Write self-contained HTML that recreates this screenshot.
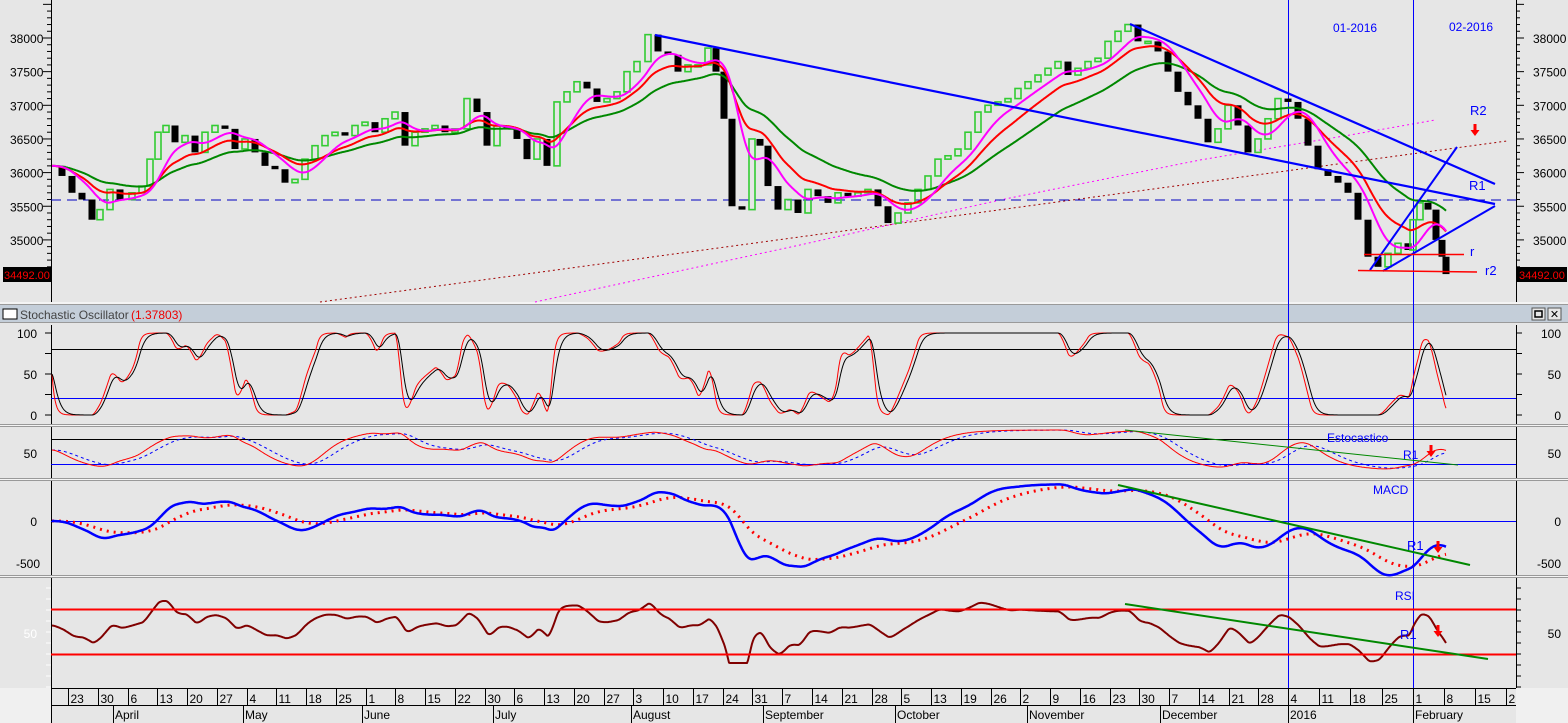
<!DOCTYPE html>
<html><head><meta charset="utf-8"><style>
html,body{margin:0;padding:0;width:1568px;height:723px;overflow:hidden;background:#e6e6e6;font-family:"Liberation Sans",sans-serif}
svg text{font-family:"Liberation Sans",sans-serif}
</style></head><body>
<svg id="s" width="1568" height="723" xmlns="http://www.w3.org/2000/svg" style="position:absolute;left:0;top:0">
<rect x="0" y="0" width="1568" height="723" fill="#e6e6e6"/>
</svg>
<script>
const S=document.getElementById('s');const NS='http://www.w3.org/2000/svg';
function el(t,a,txt){const e=document.createElementNS(NS,t);for(const k in a)e.setAttribute(k,a[k]);if(txt!==undefined)e.textContent=txt;S.appendChild(e);return e;}
function line(x1,y1,x2,y2,c,w,d){const a={x1,y1,x2,y2,stroke:c,'stroke-width':w||1};if(d)a['stroke-dasharray']=d;return el('line',a);}
function txt(x,y,s,c,sz,anc){return el('text',{x,y,fill:c||'#000','font-size':sz||12,'text-anchor':anc||'start'},s);}
function poly(pts,c,w,d){const a={points:pts.map(p=>p[0].toFixed(1)+','+p[1].toFixed(1)).join(' '),fill:'none',stroke:c,'stroke-width':w||1,'stroke-linejoin':'round'};if(d)a['stroke-dasharray']=d;return el('polyline',a);}
el('rect',{x:0,y:302,width:1568,height:3,fill:'#f4f4f4'});
el('rect',{x:0,y:305,width:1568,height:17,fill:'#c4ced9'});
line(0,304.5,1568,304.5,'#9a9a9a',1);line(0,322.5,1568,322.5,'#9a9a9a',1);
[424,478,575].forEach(y=>{el('rect',{x:0,y:y,width:1568,height:3,fill:'#f4f4f4'});line(0,y+0.5,1568,y+0.5,'#999',1);line(0,y+2.5,1568,y+2.5,'#999',1);});
el('rect',{x:3,y:309,width:14,height:10,fill:'#fff',stroke:'#000'});
txt(20,319,'Stochastic Oscillator','#444',12);txt(131,319,'(1.37803)','#e00',12);
el('rect',{x:1532,y:308,width:13,height:12,fill:'#e6e6e6',stroke:'#555'});el('rect',{x:1535,y:311,width:7,height:6,fill:'none',stroke:'#000','stroke-width':1.5});
el('rect',{x:1548,y:308,width:13,height:12,fill:'#e6e6e6',stroke:'#555'});txt(1554.5,318,'✕','#000',11,'middle');
[[0,302],[325,424],[427,478],[481,575],[578,688]].forEach(([a,b])=>{line(51.5,a,51.5,b,'#000',1);line(1516.5,a,1516.5,b,'#000',1);});
const K=[[52,36100],[62,35950],[72,35700],[82,35600],[92,35300],[100,35450],[110,35750],[120,35600],[132,35700],[142,35800],[150,36200],[158,36600],[166,36700],[175,36450],[185,36550],[195,36300],[205,36600],[215,36700],[225,36650],[235,36350],[245,36500],[255,36300],[265,36100],[275,36050],[285,35850],[295,35900],[305,36200],[315,36400],[325,36550],[335,36600],[345,36550],[355,36700],[365,36750],[375,36600],[385,36800],[395,36900],[405,36400],[415,36600],[425,36650],[435,36700],[445,36600],[455,36650],[467,37100],[477,36900],[487,36400],[497,36700],[507,36650],[517,36500],[527,36200],[537,36500],[547,36100],[557,37050],[567,37200],[577,37350],[587,37250],[597,37050],[607,37100],[617,37200],[627,37500],[637,37650],[648,38050],[658,37800],[668,37750],[678,37500],[688,37600],[698,37600],[708,37850],[716,37500],[724,36800],[732,35500],[742,35450],[752,36500],[760,36400],[768,35800],[778,35450],[788,35600],[798,35400],[808,35750],[818,35650],[828,35550],[838,35700],[848,35650],[858,35700],[868,35750],[878,35500],[888,35250],[898,35400],[908,35550],[918,35750],[928,35950],[938,36200],[948,36250],[958,36350],[968,36600],[978,36900],[988,37000],[998,37050],[1008,37100],[1018,37250],[1028,37350],[1038,37450],[1048,37550],[1058,37650],[1068,37450],[1078,37550],[1088,37650],[1098,37700],[1108,37950],[1118,38100],[1128,38200],[1138,37950],[1148,37950],[1158,37800],[1168,37500],[1178,37200],[1188,37000],[1198,36800],[1208,36450],[1218,36650],[1228,37000],[1238,36700],[1248,36300],[1258,36500],[1268,36800],[1278,37100],[1288,37050],[1298,36800],[1308,36400],[1318,36050],[1328,35950],[1338,35850],[1348,35700],[1358,35300],[1368,34750],[1378,34600],[1388,34800],[1398,34950],[1408,34850],[1413,35300],[1420,35550],[1428,35450],[1436,35000],[1442,34750],[1446,34492]];
const py=p=>38+(38000-p)*0.0673;
line(320,302,1507,141,'#a00000',1,'2,3');
poly([[535,302],[800,245],[1000,200],[1200,160],[1350,135],[1435,120]],'#ff00ff',1,'2,3');
line(51,200,1516,200,'#0000c0',1,'10,6');
line(1288.5,0,1288.5,688,'#0000ff',1);line(1413.5,0,1413.5,688,'#0000ff',1);
let prev=K[0][1];
for(let i=1;i<K.length;i++){const [x,c]=K[i];const o=prev;const up=c>=o;const y1=py(Math.max(o,c)),y2=py(Math.min(o,c));const h=Math.max(y2-y1,2);
 if(up)el('rect',{x:x-3,y:y1,width:6,height:h,fill:'none',stroke:'#33cc33','stroke-width':1.6});
 else el('rect',{x:x-3.5,y:y1,width:7,height:h,fill:'#000'});
 prev=c;}
const X=[],P=[];for(let x=52;x<=1446;x++){let j=0;while(j<K.length-2&&K[j+1][0]<x)j++;const [xa,pa]=K[j],[xb,pb]=K[j+1];const t=Math.min(1,Math.max(0,(x-xa)/(xb-xa)));X.push(x);P.push(pa+(pb-pa)*t);}
function ema(a,n){const k=2/(n+1);let r=[],v=a[0];for(const z of a){v=v+k*(z-v);r.push(v);}return r;}
function pts(a,f){return a.map((v,i)=>[X[i],f(v)]);}
poly(pts(ema(P,150),py),'#008800',2);
poly(pts(ema(P,75),py),'#ff0000',2);
poly(pts(ema(ema(P,25),20),py),'#ff00ff',2);
line(655,35,1495,204,'#0000ff',2.2);line(1130,24,1495,184,'#0000ff',2.2);
line(1383,271,1495,206,'#0000ff',2);line(1370,270,1457,147,'#0000ff',2);
line(1364,254.5,1464,254.5,'#ff0000',1.5);line(1358,270.5,1477,272,'#ff0000',1.5);
txt(1333,32,'01-2016','#0000ff',12);txt(1449,31,'02-2016','#0000ff',12);
txt(1470,115,'R2','#0000ff',13);txt(1469,190,'R1','#0000ff',13);txt(1470,256,'r','#0000ff',13);txt(1485,275,'r2','#0000ff',13);
function arrow(x,y){el('path',{d:`M${x-1.5},${y} h3 v6 h3 l-4.5,6 l-4.5,-6 h3 z`,fill:'#ff0000'});}
arrow(1475,124);
for(let p=34500;p<=38500;p+=100){const y=py(p);if(y<2||y>300)continue;const big=p%500==0;line(1516,y,1516+(big?8:4),y,'#000',1);line(51,y,51-(big?8:4),y,'#000',1);if(big&&p<=38000){txt(1533,y+5,String(p),'#000',12);txt(10,y+5,String(p),'#000',12);}}
el('rect',{x:3,y:267,width:48,height:15,fill:'#000'});txt(4,279,'34492.00','#ff0000',11);
el('rect',{x:1517,y:267,width:50,height:15,fill:'#000'});txt(1519,279,'34492.00','#ff0000',11);
const st=[];const L=70;for(let i=0;i<P.length;i++){let lo=1e9,hi=-1e9;for(let j=Math.max(0,i-L);j<=i;j++){lo=Math.min(lo,P[j]);hi=Math.max(hi,P[j]);}st.push(hi>lo?(P[i]-lo)/(hi-lo)*100:50);}
const kf=ema(st,6),ks=ema(kf,8);
const sy=v=>415-v*0.82;
line(51,349.5,1516,349.5,'#000',1);line(51,398.5,1516,398.5,'#0000ff',1);
poly(pts(kf,sy),'#ff0000',1);poly(pts(ks,sy),'#000',1);
[[100,333],[50,374],[0,415]].forEach(([v,y])=>{txt(1561,y+5,String(v),'#000',12,'end');txt(37,y+5,String(v),'#000',12,'end');});
for(let v=0;v<=100;v+=25){line(1516,sy(v),1522,sy(v),'#000',1);line(51,sy(v),45,sy(v),'#000',1);}
const e1=ema(ema(st,40),20),e2=ema(e1,25);
const ey=v=>470-v*0.4;
line(51,439.5,1516,439.5,'#000',1);line(51,464.5,1516,464.5,'#0000ff',1);
poly(pts(e2,ey),'#0000ff',1,'3,3');poly(pts(e1,ey),'#ff0000',1);
line(1125,430,1458,465,'#008800',1);
txt(1327,442,'Estocastico','#0000ff',12);txt(1403,459,'R1','#0000ff',12);arrow(1431,445);
txt(1561,458,'50','#000',12,'end');txt(37,458,'50','#000',12,'end');
const M=[];{const a=ema(P,60),b=ema(P,130);for(let i=0;i<P.length;i++)M.push(a[i]-b[i]);}
const Ms=ema(M,60);
const my=v=>521-v*0.1;
line(51,521.5,1516,521.5,'#0000ff',1);
poly(pts(Ms,my),'#ff0000',3,'2,5');poly(pts(ema(M,8),my),'#0000ff',2.5);
line(1118,485,1470,565,'#008800',2);
txt(1373,494,'MACD','#0000ff',12);txt(1407,550,'R1','#0000ff',13);arrow(1438,541);
txt(1561,526,'0','#000',12,'end');txt(37,526,'0','#000',12,'end');txt(1561,568,'-500','#000',12,'end');txt(40,568,'-500','#000',12,'end');
const Ra=ema(P,8),Rb=ema(P,70);
const R=Ra.map((v,i)=>Math.max(30,Math.min(78,55+(v-Rb[i])*0.028)));
poly(pts(R,v=>633-(v-50)*1.5),'#800000',2);
line(51,609.5,1516,609.5,'#ff0000',2);line(51,654.5,1516,654.5,'#ff0000',2);
line(1125,604,1488,659,'#008800',2);
txt(1395,600,'RSI','#0000ff',12);txt(1400,639,'R1','#0000ff',13);arrow(1438,625);
txt(1561,638,'50','#000',12,'end');txt(37,638,'50','#fff',12,'end');
for(let y=588;y<688;y+=11){line(1516,y,1521,y,'#000',1);line(51,y,46,y,'#fff',1);}
el('rect',{x:0,y:688,width:1568,height:35,fill:'#e6e6e6'});el('rect',{x:0,y:688,width:51,height:35,fill:'#f0f0f0'});el('rect',{x:1516,y:688,width:52,height:35,fill:'#f0f0f0'});
line(51.5,688,51.5,723,'#000',1);line(51,688.5,1516,688.5,'#000',1);line(51,705.5,1516,705.5,'#000',1);
const D='23 30 6 13 20 27 4 11 18 25 1 8 15 22 30 6 13 20 27 3 10 17 24 31 7 14 21 28 5 13 19 26 2 9 16 23 30 7 14 21 28 4 11 18 25 1 8 15 2'.split(' ');
D.forEach((d,i)=>{let x=i<=41?68+i*29.76:1288+(i-41)*31.2;x=Math.round(x)+0.5;line(x,689,x,705,'#000',1);txt(x+2,703,d,'#000',12);});
const Mo=[['April',113],['May',243],['June',362],['July',493],['August',631],['September',763],['October',895],['November',1027],['December',1160],['2016',1288],['February',1413]];
Mo.forEach(([t,x])=>{line(x+0.5,705,x+0.5,723,'#000',1);txt(x+2,719,t,'#000',12);});
</script>
</body></html>
